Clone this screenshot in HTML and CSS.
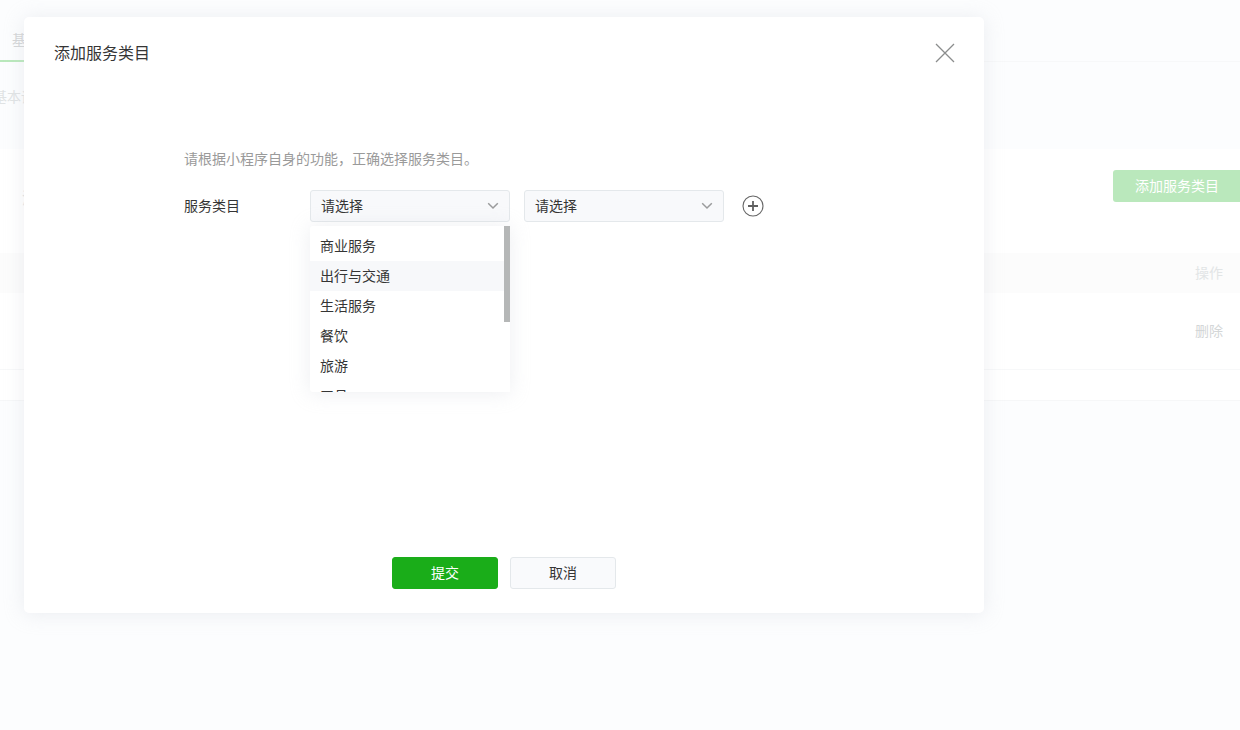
FILE: index.html
```html
<!DOCTYPE html>
<html lang="zh-CN">
<head>
<meta charset="utf-8">
<title>添加服务类目</title>
<link rel="stylesheet" href="styles.css">
</head>
<body>
<div class="page">
  <nav class="tabs"><a class="tab" href="#">基本</a></nav>
  <div class="crumb">基本设置</div>
  <main class="panel">
    <div class="panel-head">
      <h2 class="panel-title">添加</h2>
      <button class="add-btn" type="button">添加服务类目</button>
    </div>
    <table class="table">
      <thead><tr><th>操作</th></tr></thead>
      <tbody><tr><td><a class="remove" href="#">删除</a></td></tr></tbody>
    </table>
  </main>
</div>
<div class="overlay">
  <form class="dialog" role="dialog" aria-labelledby="dialog-title">
    <header class="dialog-head">
      <h1 class="dialog-title" id="dialog-title">添加服务类目</h1>
      <button class="icon-btn close" type="button" aria-label="关闭">
        <svg width="18" height="24" viewBox="1 -2 18 24" overflow="visible"><path d="M1 1L19 19M19 1L1 19" fill="none" stroke="#8b8d8d" stroke-width="1.3"/></svg>
      </button>
    </header>
    <div class="dialog-body">
      <p class="hint">请根据小程序自身的功能，正确选择服务类目。</p>
      <div class="row">
        <label class="row-label" for="category">服务类目</label>
        <div class="field">
          <select class="select" id="category"><option>请选择</option></select>
          <svg class="arrow" width="12" height="8" viewBox="0 0 12 8"><path d="M1.2 1.3L6 6L10.8 1.3" fill="none" stroke="#9a9b9c" stroke-width="1.5"/></svg>
          <div class="menu">
            <ul class="options" role="listbox" aria-label="服务类目">
              <li class="option" role="option">商业服务</li>
              <li class="option active" role="option">出行与交通</li>
              <li class="option" role="option">生活服务</li>
              <li class="option" role="option">餐饮</li>
              <li class="option" role="option">旅游</li>
              <li class="option" role="option">工具</li>
            </ul>
            <span class="thumb"></span>
          </div>
        </div>
        <div class="field">
          <select class="select" aria-label="二级类目"><option>请选择</option></select>
          <svg class="arrow" width="12" height="8" viewBox="0 0 12 8"><path d="M1.2 1.3L6 6L10.8 1.3" fill="none" stroke="#9a9b9c" stroke-width="1.5"/></svg>
        </div>
        <button class="icon-btn plus" type="button" aria-label="添加">
          <svg width="22" height="22" viewBox="0 0 22 22"><circle cx="11" cy="11" r="10" fill="none" stroke="#666" stroke-width="1.1"/><path d="M6 11H16M11 6V16" stroke="#606060" stroke-width="1.8"/></svg>
        </button>
      </div>
    </div>
    <footer class="dialog-foot">
      <button class="btn primary" type="submit">提交</button>
      <button class="btn" type="button">取消</button>
    </footer>
  </form>
</div>
</body>
</html>
```

FILE: styles.css
```css
* { box-sizing: border-box; }

body {
  margin: 0;
  min-height: 100vh;
  overflow: hidden;
  background: #fcfdfe;
  color: #353535;
  font: 14px/20px "Liberation Sans", "Noto Sans CJK SC", sans-serif;
}

h1, h2, p, ul { margin: 0; padding: 0; font-weight: 400; }

button, select { font: inherit; color: inherit; }

.tabs {
  display: flex;
  height: 62px;
  border-bottom: 1px solid #f7f8f9;
}

.tab {
  width: 24px;
  height: 62px;
  padding: 30px 0 0 12px;
  border-bottom: 2px solid #b9e8bb;
  color: #d4d6d7;
  text-decoration: none;
  white-space: nowrap;
}

.crumb {
  height: 87px;
  padding-top: 25px;
  margin-left: -7px;
  color: #e0e3e4;
}

.panel {
  padding-bottom: 30px;
  border-bottom: 1px solid #f6f7f8;
  background: #fff;
}

.panel-head {
  display: flex;
  align-items: flex-start;
  justify-content: space-between;
  height: 104px;
  padding: 21px 0 0 22px;
}

.panel-title {
  font-size: 16px;
  line-height: 58px;
  color: #e0e3e4;
}

.add-btn {
  width: 127px;
  height: 32px;
  padding: 0 22px;
  border: 0;
  border-radius: 3px 0 0 3px;
  background: #bae8bc;
  color: #fff;
  text-align: left;
  white-space: nowrap;
}

.table {
  width: 100%;
  border-collapse: collapse;
  text-align: right;
}

.table th {
  height: 40px;
  padding: 0 17px 0 0;
  background: #fcfcfc;
  color: #e2e5e6;
  font-weight: 400;
  text-align: right;
}

.table td {
  height: 76px;
  padding: 0 17px 0 0;
  border-bottom: 1px solid #f7f8f9;
}

.remove { color: #d3d6d7; text-decoration: none; }

.overlay {
  position: absolute;
  inset: 0;
  padding: 17px 24px;
}

.dialog {
  display: flex;
  flex-direction: column;
  max-width: 960px;
  min-height: 596px;
  padding: 24px 30px;
  border-radius: 5px;
  background: #fff;
  box-shadow: 0 1px 20px rgba(195, 200, 208, 0.3);
}

.dialog-head {
  display: flex;
  align-items: flex-start;
  justify-content: space-between;
}

.dialog-title { font-size: 16px; line-height: 26px; }

.icon-btn {
  display: flex;
  padding: 0;
  border: 0;
  background: none;
}

.dialog-body {
  flex: 1;
  padding: 82px 130px 0;
}

.hint { color: #9a9a9a; }

.row {
  display: flex;
  align-items: center;
  gap: 14px;
  margin-top: 21px;
}

.row-label { width: 112px; }

.field { position: relative; width: 200px; }

.select {
  display: block;
  width: 100%;
  height: 32px;
  padding: 0 10px;
  border: 1px solid #e4e8eb;
  border-radius: 3px;
  background: #f8f9fb;
  appearance: none;
}

.arrow {
  position: absolute;
  top: 12px;
  right: 11px;
  pointer-events: none;
}

.menu {
  position: absolute;
  top: 36px;
  left: 0;
  width: 100%;
  height: 166px;
  overflow: hidden;
  border-radius: 3px 0 0 3px;
  background: #fff;
  box-shadow: 0 1px 20px rgba(195, 200, 208, 0.3);
}

.options { padding: 5px 0; list-style: none; }

.option { padding: 5px 10px; }

.option.active { background: #f7f8fa; }

.thumb {
  position: absolute;
  top: 0;
  right: 0;
  width: 6px;
  height: 96px;
  background: #b5b7b7;
}

.plus { margin-left: 4px; }

.dialog-foot {
  display: flex;
  justify-content: center;
  gap: 12px;
}

.btn {
  width: 106px;
  height: 32px;
  padding: 0;
  border: 1px solid #e4e8eb;
  border-radius: 3px;
  background: #f9fafc;
}

.btn.primary {
  border-color: #1aad19;
  background: #1aad19;
  color: #fff;
}
```
